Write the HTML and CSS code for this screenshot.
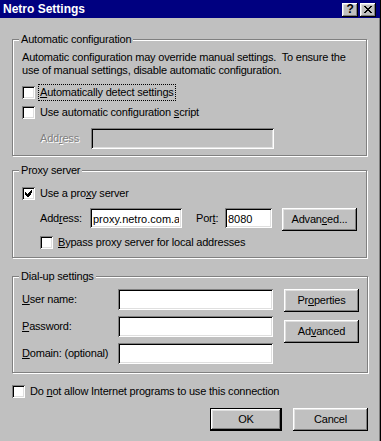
FILE: index.html
```html
<!DOCTYPE html>
<html lang="en">
<head>
    <meta charset="UTF-8">
    <title>Netro Settings</title>
    <link rel="stylesheet" href="styles.css">
</head>
<body>
    <div class="window">
        <div class="titlebar">
            <span class="title">Netro Settings</span>
            <div class="title-buttons">
                <span class="tbtn">?</span>
                <span class="tbtn">
                    <svg width="8" height="7" viewBox="0 0 8 7" shape-rendering="crispEdges">
                        <path d="M0 0h2v1h-2zM6 0h2v1h-2zM1 1h2v1h-2zM5 1h2v1h-2zM2 2h4v1h-4zM3 3h2v1h-2zM2 4h4v1h-4zM1 5h2v1h-2zM5 5h2v1h-2zM0 6h2v1h-2zM6 6h2v1h-2z" fill="#000"/>
                    </svg>
                </span>
            </div>
        </div>

        <div class="dialog">
            <!-- automatic configuration -->
            <fieldset class="group group-auto">
                <legend>Automatic configuration</legend>
                <p class="note">Automatic configuration may override manual settings.&nbsp; To ensure the<br>use of manual settings, disable automatic configuration.</p>
                <div class="check first"><span class="box"></span><span class="focus"><u>A</u>utomatically detect settings</span></div>
                <div class="check"><span class="box"></span><span class="text">Use automatic configuration <u>s</u>cript</span></div>
                <div class="row row-script">
                    <span class="lbl disabled">Add<u>r</u>ess</span>
                    <input type="text" class="edit edit-script" disabled>
                </div>
            </fieldset>

            <!-- proxy server -->
            <fieldset class="group group-proxy">
                <legend>Proxy server</legend>
                <div class="check first">
                    <span class="box">
                        <svg width="7" height="7" viewBox="0 0 7 7" shape-rendering="crispEdges">
                            <path d="M6 0h1v3h-1zM5 1h1v4h-1zM4 2h1v4h-1zM3 3h1v4h-1zM2 4h1v3h-1zM1 3h1v3h-1zM0 2h1v3h-1z" fill="#000"/>
                        </svg>
                    </span>
                    <span class="text">Use a pro<u>x</u>y server</span>
                </div>
                <div class="row row-proxy">
                    <span class="lbl lbl-address">Add<u>r</u>ess:</span>
                    <input type="text" class="edit edit-address" value="proxy.netro.com.au">
                    <span class="lbl lbl-port">Por<u>t</u>:</span>
                    <input type="text" class="edit edit-port" value="8080">
                    <button class="btn">Advan<u>c</u>ed...</button>
                </div>
                <div class="check bypass"><span class="box"></span><span class="text"><u>B</u>ypass proxy server for local addresses</span></div>
            </fieldset>

            <!-- dial-up settings -->
            <fieldset class="group group-dial">
                <legend>Dial-up settings</legend>
                <div class="dial">
                    <div class="dial-fields">
                        <span class="lbl"><u>U</u>ser name:</span>
                        <input type="text" class="edit">
                        <span class="lbl"><u>P</u>assword:</span>
                        <input type="password" class="edit">
                        <span class="lbl"><u>D</u>omain: (optional)</span>
                        <input type="text" class="edit">
                    </div>
                    <div class="dial-buttons">
                        <button class="btn">Pr<u>o</u>perties</button>
                        <button class="btn">Ad<u>v</u>anced</button>
                    </div>
                </div>
            </fieldset>

            <div class="check outside"><span class="box"></span><span class="text">Do <u>n</u>ot allow Internet programs to use this connection</span></div>

            <div class="actions">
                <button class="btn btn-default">OK</button>
                <button class="btn btn-cancel">Cancel</button>
            </div>
        </div>
    </div>
</body>
</html>
```

FILE: styles.css
```css
body {
    margin: 0;
    background-color: #c0c0c0;
    font-family: "Liberation Sans", Arial, sans-serif;
    font-size: 11px;
    line-height: 13px;
    letter-spacing: -0.2px;
    color: #000;
}

u {
    text-decoration: underline;
    text-underline-offset: 1px;
}

.window {
    width: 381px;
    height: 441px;
    box-sizing: border-box;
    border-right: 1px solid #000;
    box-shadow: inset -1px 0 #808080;
    overflow: hidden;
}

.titlebar {
    height: 18px;
    background-color: #000080;
    color: #fff;
    display: flex;
    align-items: center;
    justify-content: space-between;
    padding: 0 4px 0 3px;
}

.title {
    font-weight: bold;
    font-size: 12px;
    letter-spacing: 0;
}

.title-buttons {
    display: flex;
    gap: 2px;
    padding-top: 1px;
}

.tbtn {
    width: 16px;
    height: 14px;
    background-color: #c0c0c0;
    color: #000;
    font-weight: bold;
    font-size: 12px;
    display: flex;
    align-items: center;
    justify-content: center;
    box-shadow: inset -1px -1px #000, inset 1px 1px #fff, inset -2px -2px #808080, inset 2px 2px #dfdfdf;
}

.dialog {
    padding: 15px 13px 0 12px;
}

/* etched group boxes */
.group {
    margin: 0;
    padding: 5px 8px 6px 9px;
    border: 1px solid #808080;
    box-shadow: inset 1px 1px #fff, 1px 1px #fff;
}

.group + .group {
    margin-top: 8px;
}

.group legend {
    padding: 0 2px;
    margin-left: -3px;
    background-color: #c0c0c0;
    line-height: 13px;
}

.group-dial {
    margin-top: 12px !important;
    padding-top: 6px;
    padding-bottom: 8px;
}

.note {
    margin: 0;
    white-space: nowrap;
}

/* checkboxes */
.check {
    display: flex;
    align-items: center;
    height: 17px;
    margin-top: 3px;
    white-space: nowrap;
}

.check.first {
    margin-top: 7px;
}

.group-proxy .check.first {
    margin-top: 3px;
}

.box {
    width: 13px;
    height: 13px;
    flex: none;
    box-sizing: border-box;
    background-color: #fff;
    display: flex;
    align-items: center;
    justify-content: center;
    margin-right: 4px;
    box-shadow: inset 1px 1px #808080, inset -1px -1px #fff, inset 2px 2px #000, inset -2px -2px #dfdfdf;
}

.text,
.focus {
    padding: 0 1px;
}

.focus {
    outline: 1px dotted #000;
    line-height: 15px;
}

.check.bypass {
    margin-left: 18px;
}

.check.outside {
    margin-top: 10px;
}

/* text boxes */
.edit {
    box-sizing: border-box;
    height: 21px;
    margin: 0;
    padding: 2px 3px 0;
    border: none;
    background-color: #fff;
    font: inherit;
    color: #000;
    box-shadow: inset 1px 1px #808080, inset -1px -1px #fff, inset 2px 2px #000, inset -2px -2px #dfdfdf;
    outline: none;
}

.edit:disabled {
    background-color: #c0c0c0;
}

.row {
    display: flex;
    align-items: flex-start;
}

.row .lbl {
    line-height: 20px;
}

.lbl.disabled {
    color: #808080;
    text-shadow: 1px 1px #fff;
}

.row-script {
    margin-top: 7px;
    padding-left: 18px;
}

.row-script .lbl {
    line-height: 21px;
    width: 51px;
}

.edit-script {
    width: 183px;
}

.row-proxy {
    margin-top: 6px;
    padding-left: 18px;
}

.lbl-address {
    width: 50px;
}

.edit-address {
    width: 92px;
    height: 20px;
}

.lbl-port {
    margin-left: 14px;
    width: 29px;
}

.edit-port {
    width: 47px;
    height: 20px;
}

.row-proxy .btn {
    margin-left: 10px;
}

/* buttons */
.btn {
    box-sizing: border-box;
    width: 75px;
    height: 23px;
    padding: 0;
    border: none;
    background-color: #c0c0c0;
    font: inherit;
    letter-spacing: inherit;
    color: #000;
    box-shadow: inset -1px -1px #000, inset 1px 1px #fff, inset -2px -2px #808080, inset 2px 2px #dfdfdf;
}

.btn-default {
    width: 72px;
    border: 1px solid #000;
}

/* dial-up grid */
.dial {
    display: flex;
    align-items: flex-start;
}

.dial-fields {
    display: grid;
    grid-template-columns: 96px 155px;
    row-gap: 6px;
    align-items: center;
}

.dial-buttons {
    display: flex;
    flex-direction: column;
    gap: 8px;
    margin-left: 11px;
}

.actions {
    display: flex;
    justify-content: flex-end;
    gap: 11px;
    margin-top: 8px;
    margin-right: -1px;
}
```
